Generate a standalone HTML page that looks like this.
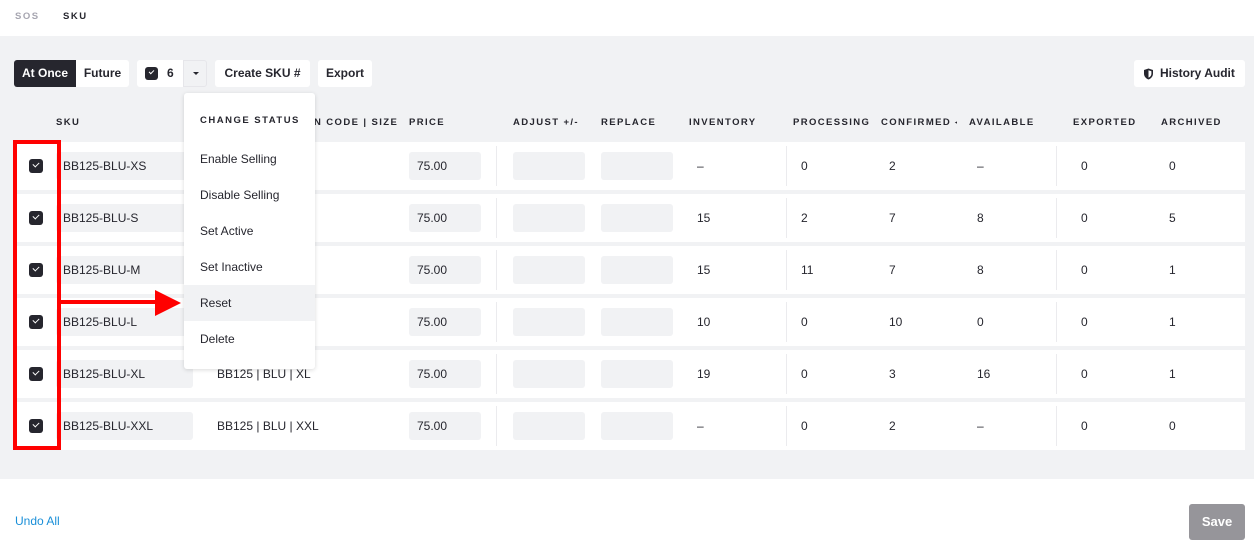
<!DOCTYPE html>
<html><head><style>
*{box-sizing:border-box;margin:0;padding:0}
body{width:1254px;height:556px;background:#fff;font-family:"Liberation Sans",sans-serif;font-size:12px;color:#26262e;position:relative;overflow:hidden}
.a{position:absolute}
.tab{top:11px;font-size:9.5px;font-weight:bold;letter-spacing:1.5px}
.gray{left:0;top:36px;width:1254px;height:443px;background:#f1f2f4}
.btn{top:60px;height:27px;background:#fff;border-radius:3px;font-weight:bold;font-size:12px;line-height:27px;text-align:center}
.hd{top:117px;font-size:9.5px;font-weight:bold;letter-spacing:1.4px}
.row{left:14px;width:1231px;height:48px;background:#fff}
.inp{position:absolute;top:10px;height:28px;background:#f1f2f4;border-radius:3px}
.t{position:absolute;top:17px;font-size:12px}
.cb{position:absolute;left:15px;top:17px;width:14px;height:14px;background:#26262e;border-radius:3px}
.cb:after{content:"";position:absolute;left:4px;top:3px;width:5px;height:3px;border-left:1.6px solid #fff;border-bottom:1.6px solid #fff;transform:rotate(-45deg)}
.dv{position:absolute;top:4px;width:1px;height:40px;background:#ebebee}
.menu{left:184px;top:93px;width:131px;height:276px;background:#fff;border-radius:3px;box-shadow:0 1px 4px rgba(0,0,0,.15)}
.mi{position:absolute;left:16px;font-size:12px}
</style></head><body>
<div class="a tab" style="left:15px;color:#a6a5b0">SOS</div>
<div class="a tab" style="left:63px">SKU</div>
<div class="a gray"></div>
<div class="a btn" style="left:14px;width:62px;background:#26262e;color:#fff;border-radius:3px 0 0 3px">At Once</div>
<div class="a btn" style="left:76px;width:53px;border-radius:0 3px 3px 0">Future</div>
<div class="a btn" style="left:137px;width:46px;border-radius:3px 0 0 3px"><span style="position:absolute;left:8px;top:7px;width:13px;height:13px;background:#26262e;border-radius:3px"></span><span style="position:absolute;left:12px;top:10px;width:5px;height:3px;border-left:1.5px solid #fff;border-bottom:1.5px solid #fff;transform:rotate(-45deg)"></span><span style="position:absolute;left:30px">6</span></div>
<div class="a btn" style="left:183px;width:24px;background:#f1f2f4;border:1px solid #e6e6ea;border-radius:0 3px 3px 0"><span style="position:absolute;left:9px;top:11px;border:3px solid transparent;border-top:3px solid #26262e"></span></div>
<div class="a btn" style="left:215px;width:95px">Create SKU #</div>
<div class="a btn" style="left:318px;width:54px">Export</div>
<div class="a btn" style="left:1134px;width:111px"><svg style="position:absolute;left:9px;top:8px" width="11" height="12" viewBox="0 0 11 12"><path d="M5.5 0.5L10 2v3.5c0 3-2 5-4.5 6C3 10.5 1 8.5 1 5.5V2z" fill="#26262e"/><path d="M5.5 2.3L8.4 3.3v2.3c0 2-1.3 3.3-2.9 4z" fill="#fff"/></svg><span style="position:absolute;left:26px">History Audit</span></div>
<div class="a hd" style="left:56px">SKU</div>
<div class="a hd" style="left:314px">N CODE | SIZE</div>
<div class="a hd" style="left:409px">PRICE</div>
<div class="a hd" style="left:513px">ADJUST +/-</div>
<div class="a hd" style="left:601px">REPLACE</div>
<div class="a hd" style="left:689px">INVENTORY</div>
<div class="a hd" style="left:793px">PROCESSING</div>
<div class="a hd" style="left:881px;width:76px;overflow:hidden;white-space:nowrap">CONFIRMED ◂</div>
<div class="a hd" style="left:969px">AVAILABLE</div>
<div class="a hd" style="left:1073px">EXPORTED</div>
<div class="a hd" style="left:1161px">ARCHIVED</div>

<div class="a row" style="top:142px"><div class="cb"></div><div class="inp" style="left:42px;width:137px"></div><div class="t" style="left:49px">BB125-BLU-XS</div><div class="inp" style="left:395px;width:72px"></div><div class="t" style="left:403px">75.00</div><div class="dv" style="left:482px"></div><div class="inp" style="left:499px;width:72px"></div><div class="inp" style="left:587px;width:72px"></div><div class="t" style="left:683px">–</div><div class="dv" style="left:772px"></div><div class="t" style="left:787px">0</div><div class="t" style="left:875px">2</div><div class="t" style="left:963px">–</div><div class="dv" style="left:1042px"></div><div class="t" style="left:1067px">0</div><div class="t" style="left:1155px">0</div></div>
<div class="a row" style="top:194px"><div class="cb"></div><div class="inp" style="left:42px;width:137px"></div><div class="t" style="left:49px">BB125-BLU-S</div><div class="inp" style="left:395px;width:72px"></div><div class="t" style="left:403px">75.00</div><div class="dv" style="left:482px"></div><div class="inp" style="left:499px;width:72px"></div><div class="inp" style="left:587px;width:72px"></div><div class="t" style="left:683px">15</div><div class="dv" style="left:772px"></div><div class="t" style="left:787px">2</div><div class="t" style="left:875px">7</div><div class="t" style="left:963px">8</div><div class="dv" style="left:1042px"></div><div class="t" style="left:1067px">0</div><div class="t" style="left:1155px">5</div></div>
<div class="a row" style="top:246px"><div class="cb"></div><div class="inp" style="left:42px;width:137px"></div><div class="t" style="left:49px">BB125-BLU-M</div><div class="inp" style="left:395px;width:72px"></div><div class="t" style="left:403px">75.00</div><div class="dv" style="left:482px"></div><div class="inp" style="left:499px;width:72px"></div><div class="inp" style="left:587px;width:72px"></div><div class="t" style="left:683px">15</div><div class="dv" style="left:772px"></div><div class="t" style="left:787px">11</div><div class="t" style="left:875px">7</div><div class="t" style="left:963px">8</div><div class="dv" style="left:1042px"></div><div class="t" style="left:1067px">0</div><div class="t" style="left:1155px">1</div></div>
<div class="a row" style="top:298px"><div class="cb"></div><div class="inp" style="left:42px;width:137px"></div><div class="t" style="left:49px">BB125-BLU-L</div><div class="inp" style="left:395px;width:72px"></div><div class="t" style="left:403px">75.00</div><div class="dv" style="left:482px"></div><div class="inp" style="left:499px;width:72px"></div><div class="inp" style="left:587px;width:72px"></div><div class="t" style="left:683px">10</div><div class="dv" style="left:772px"></div><div class="t" style="left:787px">0</div><div class="t" style="left:875px">10</div><div class="t" style="left:963px">0</div><div class="dv" style="left:1042px"></div><div class="t" style="left:1067px">0</div><div class="t" style="left:1155px">1</div></div>
<div class="a row" style="top:350px"><div class="cb"></div><div class="inp" style="left:42px;width:137px"></div><div class="t" style="left:49px">BB125-BLU-XL</div><div class="t" style="left:203px">BB125 | BLU | XL</div><div class="inp" style="left:395px;width:72px"></div><div class="t" style="left:403px">75.00</div><div class="dv" style="left:482px"></div><div class="inp" style="left:499px;width:72px"></div><div class="inp" style="left:587px;width:72px"></div><div class="t" style="left:683px">19</div><div class="dv" style="left:772px"></div><div class="t" style="left:787px">0</div><div class="t" style="left:875px">3</div><div class="t" style="left:963px">16</div><div class="dv" style="left:1042px"></div><div class="t" style="left:1067px">0</div><div class="t" style="left:1155px">1</div></div>
<div class="a row" style="top:402px"><div class="cb"></div><div class="inp" style="left:42px;width:137px"></div><div class="t" style="left:49px">BB125-BLU-XXL</div><div class="t" style="left:203px">BB125 | BLU | XXL</div><div class="inp" style="left:395px;width:72px"></div><div class="t" style="left:403px">75.00</div><div class="dv" style="left:482px"></div><div class="inp" style="left:499px;width:72px"></div><div class="inp" style="left:587px;width:72px"></div><div class="t" style="left:683px">–</div><div class="dv" style="left:772px"></div><div class="t" style="left:787px">0</div><div class="t" style="left:875px">2</div><div class="t" style="left:963px">–</div><div class="dv" style="left:1042px"></div><div class="t" style="left:1067px">0</div><div class="t" style="left:1155px">0</div></div>

<div class="a menu">
<div class="mi" style="top:22px;font-size:9.5px;font-weight:bold;letter-spacing:1.5px">CHANGE STATUS</div>
<div class="mi" style="top:59px">Enable Selling</div>
<div class="mi" style="top:95px">Disable Selling</div>
<div class="mi" style="top:131px">Set Active</div>
<div class="mi" style="top:167px">Set Inactive</div>
<div style="position:absolute;left:0;top:192px;width:131px;height:36px;background:#f1f2f4"></div>
<div class="mi" style="top:203px">Reset</div>
<div class="mi" style="top:239px">Delete</div>
</div>

<div class="a" style="left:13px;top:140px;width:48px;height:310px;border:4px solid #f00"></div>
<div class="a" style="left:61px;top:300px;width:96px;height:4px;background:#f00"></div>
<svg class="a" style="left:155px;top:290px" width="26" height="26"><path d="M0 0L26 13L0 26z" fill="#f00"/></svg>

<div class="a" style="left:15px;top:514px;color:#1a8fd8;font-size:12px">Undo All</div>
<div class="a" style="left:1189px;top:504px;width:56px;height:36px;background:#96959a;border-radius:3px;color:#fff;font-weight:bold;font-size:13px;line-height:36px;text-align:center">Save</div>
</body></html>
